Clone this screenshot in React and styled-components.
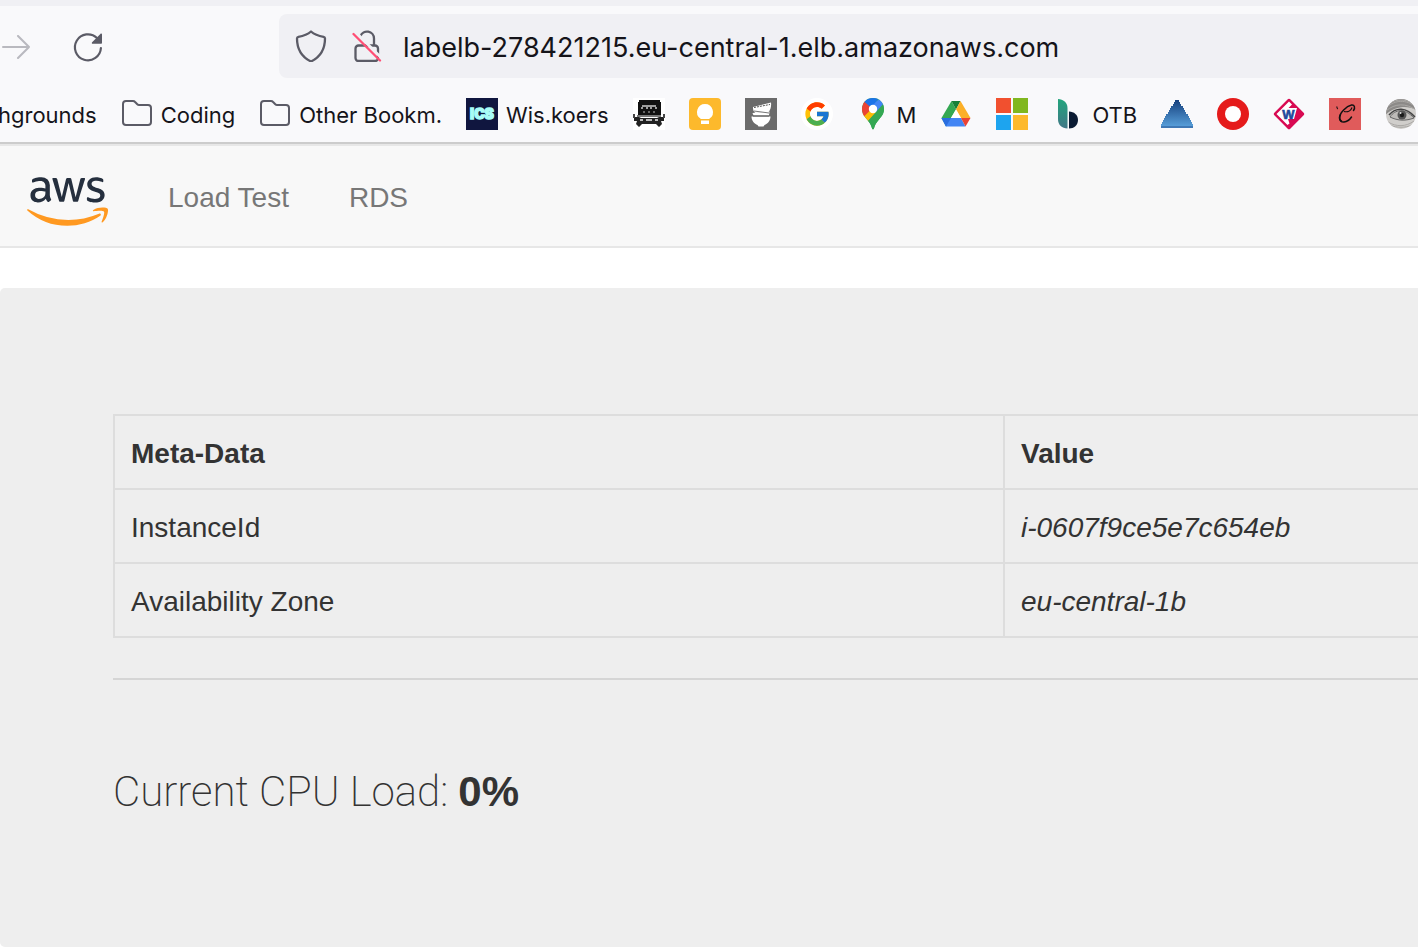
import React from "react";
import styled, { createGlobalStyle } from "styled-components";
import { FcGoogle } from "react-icons/fc";
import { FaAws } from "react-icons/fa";

const GlobalStyle = createGlobalStyle`
  *, *::before, *::after { box-sizing: border-box; }
  html { overflow-x: hidden; }
  body {
    margin: 0;
    background: #fff;
    color: #333;
    font-family: "Liberation Sans", Arial, sans-serif;
    font-size: 28px;
    line-height: 40px;
  }
`;

const Chrome = styled.header`
  background: #f9f9fb;
  border-top: 6px solid #f0f0f4;
  border-bottom: 2px solid #ccc;
  color: #15141a;
  font-family: Inter, sans-serif;
  overflow: hidden;
`;

const Toolbar = styled.div`
  display: flex;
  align-items: center;
  height: 72px;
  padding-top: 8px;
  gap: 40px;
`;

const ToolButton = styled.button`
  display: flex;
  flex: none;
  padding: 2px 0 0;
  border: 0;
  background: none;
  color: #5b5b66;
  opacity: ${(p) => (p.disabled ? 0.4 : 1)};
`;

const AddressBar = styled.form`
  display: flex;
  flex: 1;
  align-items: center;
  gap: 24px;
  height: 64px;
  margin-left: 135px;
  padding-left: 16px;
  border-radius: 8px 0 0 8px;
  background: #f0f0f4;
`;

const AddressInput = styled.input`
  flex: 1;
  min-width: 0;
  height: 40px;
  padding: 2px 0 0;
  margin-left: -4px;
  border: 0;
  outline: 0;
  background: none;
  color: #15141a;
  font: 27px/38px Inter, sans-serif;
`;

const Bookmarks = styled.nav`
  display: flex;
  align-items: center;
  gap: 24px;
  height: 64px;
  margin-top: 4px;
  margin-bottom: -4px;
  margin-left: -2px;
`;

const Bookmark = styled.a`
  display: flex;
  flex: none;
  align-items: center;
  gap: 8px;
  height: 40px;
  color: inherit;
  font-size: 22px;
  line-height: 32px;
  text-decoration: none;
  white-space: nowrap;

  svg { display: block; }
`;

const BookmarkLabel = styled.span`
  padding-top: 2px;
`;

const Navbar = styled.nav`
  display: flex;
  align-items: center;
  gap: 60px;
  height: 104px;
  padding-left: 27px;
  border: 2px solid #e7e7e7;
  border-width: 2px 0;
  background: #f8f8f8;
`;

const Brand = styled.a`
  display: flex;
  flex: none;
  padding-top: 10px;
`;

const NavLink = styled.a`
  padding-top: 4px;
  color: #777;
  text-decoration: none;
`;

const Jumbotron = styled.main`
  margin: 40px 0 3px;
  padding: 126px 0 125px 113px;
  border-radius: 5px 0 0 5px;
  background: #eee;
`;

const MetaTable = styled.table`
  width: 100%;
  table-layout: fixed;
  border-collapse: separate;
  border-spacing: 0;
  border: 2px solid #ddd;
  border-width: 2px 0 0 2px;
  text-align: left;

  th, td {
    padding: 18px 16px 14px;
    border-bottom: 2px solid #ddd;
  }
  tr > :first-child {
    width: 890px;
    border-right: 2px solid #ddd;
  }
`;

const Rule = styled.hr`
  height: 2px;
  margin: 40px 0 82px;
  border: 0;
  background: #d5d5d5;
`;

const CpuLoad = styled.p`
  margin: 0;
  font-family: Roboto, sans-serif;
  font-size: 42px;
  font-weight: 200;
  line-height: 60px;

  b {
    font-family: "Liberation Sans", Arial, sans-serif;
    font-weight: 700;
  }
`;

const Icon = ({ children, size = 32, ...rest }) => (
  <svg width={size} height={size} viewBox="0 0 32 32" fill="none" aria-hidden="true" {...rest}>
    {children}
  </svg>
);

const line = { stroke: "#5b5b66", strokeWidth: 2, strokeLinecap: "round", strokeLinejoin: "round" };

const ForwardIcon = () => (
  <Icon>
    <path d="M3 16H29M18 5l11 11-11 11" {...line} />
  </Icon>
);

const ReloadIcon = () => (
  <Icon>
    <path d="M28.900 17A13 13 0 1 1 25 7" {...line} strokeWidth="2.200" />
    <path d="M30 3.500V12a.8.8 0 0 1-.8.8H20.700c-.9 0-1.200-1-.6-1.600L28.400 2.900c.6-.6 1.600-.2 1.600.6z" fill="#5b5b66" />
  </Icon>
);

const ShieldIcon = () => (
  <Icon>
    <path d="M16 1.500c4 3.500 8.500 4.600 12.600 5.300.9.200 1.400.8 1.400 1.600 0 12-5 18.600-14 23.100C7 27 2 20.400 2 8.400c0-.8.5-1.400 1.400-1.600C7.500 6.100 12 5 16 1.500z" {...line} strokeWidth="2.300" />
  </Icon>
);

const LockIcon = () => (
  <Icon>
    <rect x="4.500" y="15.500" width="22.500" height="15.500" rx="3" {...line} strokeWidth="2.300" />
    <path d="M9.500 6a7 7 0 0 1 13.500 2.500V15" {...line} strokeWidth="2.300" />
    <path d="M4 1.500L31 28.500" stroke="#f0f0f4" strokeWidth="3" />
    <path d="M2.500 4L29 30.500" stroke="#ff4f75" strokeWidth="2.300" strokeLinecap="round" />
  </Icon>
);

const FolderIcon = () => (
  <Icon>
    <path d="M2 6a3 3 0 0 1 3-3h7c1 0 1.500.3 2.100 1l2.200 2.300c.5.500 1 .7 1.700.7H27a3 3 0 0 1 3 3v14a3 3 0 0 1-3 3H5a3 3 0 0 1-3-3z" {...line} />
  </Icon>
);

const IcsIcon = () => (
  <Icon>
    <path d="M0 0h32v32H0z" fill="#10163f" />
    <text x="16" y="21" textAnchor="middle" fontFamily="Inter, sans-serif" fontSize="14" fontWeight="900" fill="#a8fcf8" stroke="#a8fcf8" strokeWidth="1.400">ICS</text>
  </Icon>
);

const TruckIcon = () => (
  <Icon>
    <path d="M0 0h32v32H0z" fill="#fff" />
    <path d="M6 2h21v2h1v13H5V4h1z" fill="#111" />
    <path d="M9 8h14M9 9v2M14 9v2M18 9v2M23 9v2" stroke="#ccc" strokeWidth="1.500" />
    <path d="M11 13v2M16 13v2M21 13v2" stroke="#666" strokeWidth="2" />
    <path d="M4 18h24" stroke="#777" strokeWidth="2" />
    <path d="M1 19h5l2 1h16l2-1h5v4h-3l1 3-3 3-3-3H9l-3 3-3-3 1-3H1z" fill="#222" />
    <path d="M7 21h3v2H7zM22 21h3v2h-3zM13 21h6v2h-6z" fill="#bbb" />
    <path d="M1 16v4M31 16v4" stroke="#444" strokeWidth="2" />
  </Icon>
);

const BulbIcon = () => (
  <Icon>
    <rect width="32" height="32" rx="4" fill="#fdb92c" />
    <path d="M16 6a8 8 0 0 0-4.500 14.600V21h9v-.4A8 8 0 0 0 16 6zM12 22.500h8V26h-8z" fill="#fff" />
  </Icon>
);

const BowlsIcon = () => (
  <Icon>
    <path d="M0 0h32v32H0z" fill="#6b6b6b" />
    <path d="M8 9L26 4.500c.5 4-.5 7.500-2.500 9.500l-13 1C8.500 13.500 7.800 11.500 8 9z" fill="#fff" />
    <path d="M7.500 15l17-1.500-.5 4H8.500z" fill="#fff" />
    <path d="M6.500 18.500h19c0 4-3 7.500-6 8.500l-1 1.500h-5l-1-1.500c-3-1-6-4.500-6-8.500z" fill="#fff" />
    <path d="M9 9.500l16-3" stroke="#555" strokeDasharray="2 1" />
    <path d="M9 13l15 2" stroke="#777" />
    <path d="M8 18h16" stroke="#555" />
  </Icon>
);

const GoogleDisc = styled.span`
  display: grid;
  place-items: center;
  width: 32px;
  height: 32px;
  border-radius: 50%;
  background: #fff;
`;

const MapsIcon = () => (
  <Icon>
    <clipPath id="pin">
      <path d="M16 0C9.600 0 5 4.900 5 11c0 4.600 2.200 7.200 5 10.500 2.600 3.100 4.300 5.600 4.900 8.500.3 1.800 1.900 1.800 2.200 0 .6-2.900 2.300-5.400 4.900-8.500 2.800-3.300 5-5.900 5-10.500C27 4.900 22.400 0 16 0z" />
    </clipPath>
    <g clipPath="url(#pin)">
      <path d="M0 0h32v32H0z" fill="#34a853" />
      <path d="M13 8L25-1l4 6-9 10z" fill="#4285f4" />
      <path d="M4 17l10-9 5 7L8 27z" fill="#fbbc04" />
      <path d="M3 15l4 3.500 9-9L7 2z" fill="#ea4335" />
      <path d="M7 3.500l7 6L23-1H9z" fill="#1a73e8" />
      <path d="M19 14L28 4v16L17 34 9 25z" fill="#34a853" />
    </g>
    <circle cx="16" cy="11" r="4.200" fill="#fff" />
  </Icon>
);

const DriveIcon = () => (
  <Icon>
    <path d="M11.500 3L1.500 20l4.500 8.500L16 11.500z" fill="#34a853" />
    <path d="M11.500 3h9L16 11.500z" fill="#188038" />
    <path d="M20.500 3L16 11.500 21 20h9.500z" fill="#fbaf28" />
    <path d="M1.500 20H21l4.500 8.500H6z" fill="#4285f4" />
    <path d="M1.500 20H11L6 28.500z" fill="#2a6ee0" />
    <path d="M21 20h9.500l-5 8.500z" fill="#ea4335" />
    <path d="M16 11.500L21 20H11z" fill="#fff" />
  </Icon>
);

const MicrosoftIcon = () => (
  <Icon>
    <path d="M0 0h15v15H0z" fill="#f1502f" />
    <path d="M17 0h15v15H17z" fill="#80b71f" />
    <path d="M0 17h15v15H0z" fill="#1da4ef" />
    <path d="M17 17h15v15H17z" fill="#fdb92c" />
  </Icon>
);

const LeafIcon = () => (
  <Icon>
    <linearGradient id="leaf" x1="0" y1="0" x2="0" y2="1">
      <stop stopColor="#22a57c" />
      <stop offset="1" stopColor="#417787" />
    </linearGradient>
    <path d="M6 1c5 0 9.500 3.500 9.500 9v20.500C10 30.500 6 27 6 21z" fill="url(#leaf)" />
    <path d="M17 13.500c5 0 9 3.500 9 8.500s-4 8.500-9 8.500z" fill="#0b1b33" />
  </Icon>
);

const TriangleIcon = () => (
  <Icon shapeRendering="crispEdges">
    <linearGradient id="tri" x1="0" y1="0" x2="0" y2="1">
      <stop stopColor="#16407d" />
      <stop offset="1" stopColor="#5ba4df" />
    </linearGradient>
    <path d="M14 2h4v2h1v2h1v2h2v2h1v2h1v2h1v2h2v2h1v2h1v2h1v2h1v2h1v4H0v-4h1v-2h1v-2h1v-2h1v-2h1v-2h2v-2h1v-2h1v-2h1V8h2V6h1V4h1z" fill="url(#tri)" />
    <path d="M0 29h32" stroke="#3f78b5" strokeWidth="2" />
  </Icon>
);

const RingIcon = () => (
  <Icon>
    <circle cx="16" cy="16" r="16" fill="#e51b1b" />
    <circle cx="16" cy="16" r="8" fill="#fff" />
  </Icon>
);

const DiamondIcon = () => (
  <Icon>
    <path d="M14.500 1.600a2 2 0 0 1 3 0l12.900 12.900a2 2 0 0 1 0 3L17.500 30.400a2 2 0 0 1-3 0L1.600 17.500a2 2 0 0 1 0-3z" fill="#d80a52" />
    <path d="M16 3.500L19 6.500 15.500 10H24l-3 11h-6l1.500 4.500L14.500 27 3.500 16z" fill="#fff" />
    <text x="15.500" y="20.500" textAnchor="middle" fontFamily="Liberation Sans, sans-serif" fontSize="13" fontWeight="700" fill="#1f4a9c" stroke="#1f4a9c" strokeWidth=".6">W</text>
  </Icon>
);

const ScriptIcon = () => (
  <Icon>
    <path d="M0 0h32v32H0z" fill="#e05b5b" />
    <path d="M24.500 12.500c2-3 1-6-2-5.500-5 1-12 8-12 13 0 6 8 5 12-1" stroke="#111" strokeWidth="1.500" strokeLinecap="round" />
    <path d="M11.500 16.500c-1.500 3-1 6 1.500 7" stroke="#111" strokeWidth="1.500" />
    <path d="M8 8.500q-.5 2 1 2.500M15 13.500c4 1 7-1 8-4" stroke="#111" strokeWidth="1.200" />
  </Icon>
);

const EyeIcon = () => (
  <Icon>
    <clipPath id="disc"><circle cx="16" cy="16" r="15" /></clipPath>
    <g clipPath="url(#disc)">
      <path d="M0 0h32v32H0z" fill="#d0cecb" />
      <path d="M0 0h32v12C22 7 10 8 0 17z" fill="#8c8a88" />
      <path d="M2 9c8-7 19-8 29 0M1 13c9-8 20-8 30-1M5 5c7-4 15-4 22 0M3 24c8 5 18 5 26-1M5 27c7 3 15 3 22 0" stroke="#aaa8a5" />
      <path d="M5 19C10 11 20 10 29 20c-8 3-16 3-24-1z" fill="#bdbbb8" stroke="#666" />
      <circle cx="17" cy="17" r="4.500" fill="#555" />
      <circle cx="17" cy="17" r="2.200" fill="#1a1a1a" />
      <circle cx="15.500" cy="15" r="1" fill="#ddd" />
      <path d="M4 17C11 9 21 9 30 19" stroke="#444" strokeWidth="1.600" />
    </g>
  </Icon>
);

const GoogleIcon = () => (
  <GoogleDisc>
    <FcGoogle size={28} aria-hidden="true" />
  </GoogleDisc>
);

const AwsLogo = () => (
  <svg width="81" height="65" viewBox="0 0 640 512" aria-hidden="true">
    <linearGradient id="aws" gradientUnits="userSpaceOnUse" x1="0" y1="0" x2="0" y2="512">
      <stop offset="0.560" stopColor="#252f3e" />
      <stop offset="0.560" stopColor="#ff9921" />
    </linearGradient>
    <FaAws size={640} y={-64} fill="url(#aws)" />
  </svg>
);

const bookmarks = [
  { label: "hgrounds" },
  { icon: FolderIcon, label: "Coding" },
  { icon: FolderIcon, label: "Other Bookm." },
  { icon: IcsIcon, label: "Wis.koers" },
  { icon: TruckIcon, name: "Truck" },
  { icon: BulbIcon, name: "Keep" },
  { icon: BowlsIcon, name: "Bowls" },
  { icon: GoogleIcon, name: "Google" },
  { icon: MapsIcon, label: "M" },
  { icon: DriveIcon, name: "Drive" },
  { icon: MicrosoftIcon, name: "Microsoft" },
  { icon: LeafIcon, label: "OTB" },
  { icon: TriangleIcon, name: "Triangle" },
  { icon: RingIcon, name: "Ring" },
  { icon: DiamondIcon, name: "W" },
  { icon: ScriptIcon, name: "C" },
  { icon: EyeIcon, name: "Eye" },
];

export default function App() {
  return (
    <>
      <GlobalStyle />
      <Chrome>
        <Toolbar>
          <ToolButton disabled aria-label="Forward"><ForwardIcon /></ToolButton>
          <ToolButton aria-label="Reload"><ReloadIcon /></ToolButton>
          <AddressBar>
            <ShieldIcon />
            <LockIcon />
            <AddressInput aria-label="Address" defaultValue="labelb-278421215.eu-central-1.elb.amazonaws.com" />
          </AddressBar>
        </Toolbar>
        <Bookmarks aria-label="Bookmarks">
          {bookmarks.map(({ icon: Glyph, label, name }, i) => (
            <Bookmark key={i} href="#" aria-label={name}>
              {Glyph && <Glyph />}
              {label && <BookmarkLabel>{label}</BookmarkLabel>}
            </Bookmark>
          ))}
        </Bookmarks>
      </Chrome>
      <Navbar>
        <Brand href="#" aria-label="AWS"><AwsLogo /></Brand>
        <NavLink href="#">Load Test</NavLink>
        <NavLink href="#">RDS</NavLink>
      </Navbar>
      <Jumbotron>
        <MetaTable>
          <thead>
            <tr><th scope="col">Meta-Data</th><th scope="col">Value</th></tr>
          </thead>
          <tbody>
            <tr><td>InstanceId</td><td><i>i-0607f9ce5e7c654eb</i></td></tr>
            <tr><td>Availability Zone</td><td><i>eu-central-1b</i></td></tr>
          </tbody>
        </MetaTable>
        <Rule />
        <CpuLoad>Current CPU Load: <b>0%</b></CpuLoad>
      </Jumbotron>
    </>
  );
}
